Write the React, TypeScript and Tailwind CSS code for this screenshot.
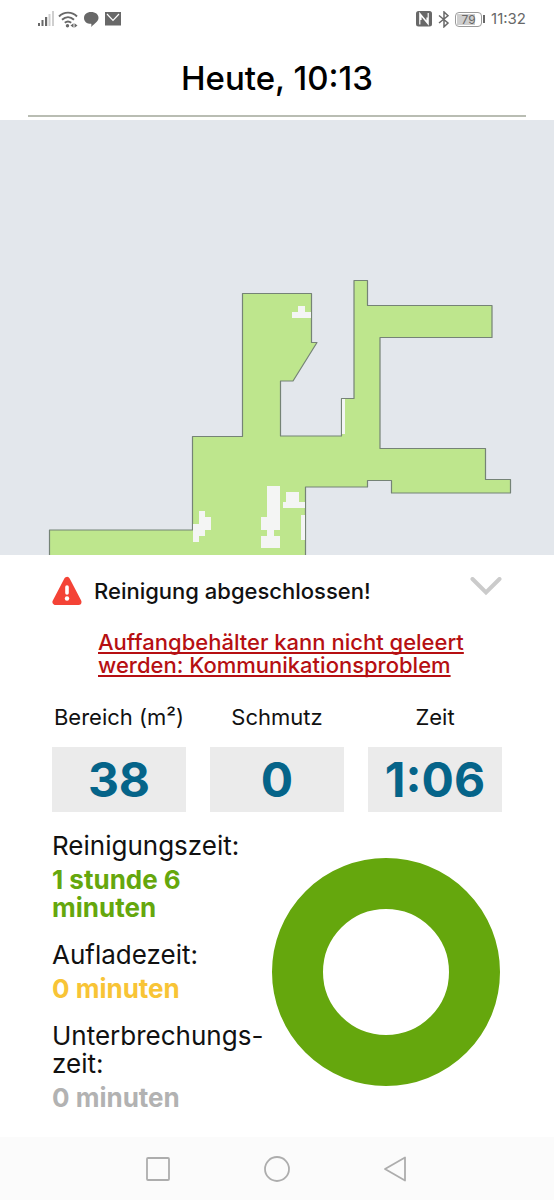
import type { ReactNode } from "react"

interface Stat {
  label: ReactNode
  value: string
}

interface Duration {
  label: ReactNode
  value: string
  color: string
}

const stats: Stat[] = [
  { label: "Bereich (m²)", value: "38" },
  { label: "Schmutz", value: "0" },
  { label: "Zeit", value: "1:06" },
]

const durations: Duration[] = [
  { label: "Reinigungszeit:", value: "1 stunde 6 minuten", color: "text-[#65a70d]" },
  { label: "Aufladezeit:", value: "0 minuten", color: "text-[#f8c436]" },
  {
    label: (
      <>
        Unterbrechungs-
        <br />
        zeit:
      </>
    ),
    value: "0 minuten",
    color: "text-[#b2b2b2]",
  },
]

function StatusBar() {
  return (
    <div className="flex h-[38px] items-center justify-between pr-7 pl-9 text-[#686868]">
      <div className="flex items-center gap-1">
        <svg width="18" height="16" viewBox="0 0 18 16" fill="currentColor">
          <rect x="2" y="12" width="2" height="3" />
          <rect x="5.5" y="9" width="2" height="6" />
          <rect x="9" y="6" width="2.2" height="9" />
          <g fill="#cfcfcf">
            <rect x="12.5" y="3" width="2" height="12" />
            <rect x="16" y="0" width="2" height="15" />
          </g>
        </svg>
        <svg width="20" height="17" viewBox="0 0 20 17" fill="none" stroke="currentColor" strokeWidth="1.9">
          <path d="M1 5.5C6 .3 14 .3 19 5.5" />
          <path d="M4 8.8c3.6-3.4 8.4-3.4 12 0" />
          <path d="M6.8 11.8c2-1.7 4.3-1.7 6.4 0" />
          <circle cx="9.5" cy="14.8" r="1.7" fill="currentColor" stroke="none" />
          <path d="M15.5 12.2 12.5 14.5l3 2.3zM16.5 12.2l3 2.3-3 2.3z" fill="currentColor" stroke="none" />
        </svg>
        <svg width="18" height="17" viewBox="0 0 18 17" fill="currentColor">
          <path d="M9 1c4.5 0 7.5 2.4 7.5 5.8 0 3.4-2.7 5-7.5 9.2.5-1.5.5-2.2.2-3.2C4.5 12.8 2 10.3 2 6.9 2 3.4 4.8 1 9 1z" />
        </svg>
        <svg width="18" height="16" viewBox="0 0 18 16">
          <rect x="1" y="1" width="16" height="13.5" fill="currentColor" />
          <path d="M3 3 9 9.3 15 3" fill="none" stroke="white" strokeWidth="1.2" />
        </svg>
      </div>
      <div className="flex items-center gap-1">
        <svg width="18" height="16" viewBox="0 0 18 16">
          <rect x="1" y="0" width="16" height="15.5" rx="2.5" fill="currentColor" />
          <path
            d="M4.8 13.5V2.5L12 11.2V6.5M13.2 2V13L6 4.3V9"
            fill="none"
            stroke="white"
            strokeWidth="1.2"
          />
        </svg>
        <svg width="14" height="17" viewBox="2 0 14 17" fill="none" stroke="currentColor" strokeWidth="1.5">
          <path d="M4 4.5 13 12l-4 3.8V1l4 3.8L4 12" />
        </svg>
        <div className="flex items-center gap-px">
          <div className="relative h-[15px] w-[27px] rounded-sm border border-[#9a9a9a] p-px">
            <div className="h-full w-4/5 bg-[#cecece]" />
            <span className="absolute inset-0 text-center text-xs leading-[13px]">79</span>
          </div>
          <div className="h-2 w-0.5 bg-[#686868]" />
        </div>
        <span className="ml-0.5 text-[15px] leading-5">11:32</span>
      </div>
    </div>
  )
}

function CleaningMap() {
  return (
    <svg viewBox="0 0 554 435" className="block w-full bg-[#e3e7ec]" role="img">
      <path
        d="M49.5 436V410H192.5V316.5H242.5V173.5H311.5V222.5H317L293 261H280.5V316H341.5V278.5H354V160.5H367.5V185.5H492V217.5H380V328.5H485.5V359.5H510.5V373H391.5V360.5H367.5V367H305.5V436"
        fill="#bee68d"
        stroke="#758376"
        strokeWidth="1.2"
        strokeLinejoin="round"
      />
      <g fill="#f4f5f4">
        <path d="M292 192h6v-6h7v6h6v6h-19z" />
        <path d="M342 279h3v35h-3z" />
        <path d="M193 404h6v-13h6v6h6v13h-6v6h-6v6h-6z" />
        <path d="M267 366h13v44h-6v6h6v12h-19v-12h6v-6h-6v-13h6z" />
        <path d="M286 372h13v10h6v6h-22v-6h3z" />
        <path d="M301 395h4v25h-4z" />
      </g>
    </svg>
  )
}

function WarningIcon() {
  return (
    <svg width="30" height="30" viewBox="0 0 30 30" className="shrink-0">
      <path
        d="M15 4 3.5 26h23z"
        fill="#f44336"
        stroke="#f44336"
        strokeWidth="6"
        strokeLinejoin="round"
      />
      <path d="M15 11v6" stroke="white" strokeWidth="3.6" strokeLinecap="round" />
      <circle cx="15" cy="22.5" r="2.2" fill="white" />
    </svg>
  )
}

export default function App() {
  return (
    <div className="flex min-h-screen flex-col bg-white font-['Inter',sans-serif] text-[#111]">
      <StatusBar />

      {/* Title */}
      <header className="mx-7 mb-[3px] border-b-2 border-[#b9bdb3] pt-5 pb-[17px]">
        <h1 className="text-center text-[33px] leading-10 font-medium text-black">Heute, 10:13</h1>
      </header>

      <CleaningMap />

      <main className="flex-1 px-[52px] pt-5">
        {/* Result */}
        <div className="flex items-center gap-3">
          <WarningIcon />
          <h2 className="flex-1 text-[22px] leading-8 font-medium">Reinigung abgeschlossen!</h2>
          <button type="button" aria-label="Details" className="-mt-2">
            <svg width="32" height="20" viewBox="0 0 32 20" fill="none">
              <path d="m2.5 2 13.5 13.5 13.5-13.5" stroke="#cbcbcb" strokeWidth="4" strokeLinecap="round" />
            </svg>
          </button>
        </div>

        <a
          href="#"
          className="mt-6 ml-[46px] block text-[22px] leading-[23px] font-medium text-[#b60f12] underline decoration-2 underline-offset-2 [text-decoration-skip-ink:none]"
        >
          Auffangbehälter kann nicht geleert werden: Kommunikationsproblem
        </a>

        {/* Totals */}
        <dl className="mt-[26px] grid grid-cols-3 gap-6">
          {stats.map((stat) => (
            <div key={stat.value} className="text-center">
              <dt className="text-[22px] leading-7 whitespace-nowrap">{stat.label}</dt>
              <dd className="mt-4 bg-[#ebebeb] text-[48px] leading-[65px] font-bold text-[#056489]">
                {stat.value}
              </dd>
            </div>
          ))}
        </dl>

        {/* Time breakdown */}
        <div className="mt-5 flex items-center justify-between pr-0.5">
          <dl className="flex w-[220px] flex-col gap-[19px] text-[26px] leading-7">
            {durations.map((duration, i) => (
              <div key={i}>
                <dt className="whitespace-nowrap">{duration.label}</dt>
                <dd className={`mt-[6px] w-40 font-bold ${duration.color}`}>{duration.value}</dd>
              </div>
            ))}
          </dl>
          <svg viewBox="0 0 228 228" className="w-[228px] shrink-0">
            <circle cx="114" cy="114" r="88.5" fill="none" stroke="#65a70d" strokeWidth="51" />
          </svg>
        </div>
      </main>

      {/* System navigation */}
      <nav className="flex h-[63px] items-center justify-center gap-[94px] bg-[#fbfbfb]">
        <button type="button" aria-label="Übersicht">
          <svg width="24" height="24" viewBox="0 0 24 24" fill="none" stroke="#adadad" strokeWidth="1.8">
            <rect x="1" y="1" width="22" height="22" rx="1" />
          </svg>
        </button>
        <button type="button" aria-label="Startseite">
          <svg width="26" height="26" viewBox="0 0 26 26" fill="none" stroke="#adadad" strokeWidth="1.8">
            <circle cx="13" cy="13" r="12" />
          </svg>
        </button>
        <button type="button" aria-label="Zurück">
          <svg
            width="24"
            height="26"
            viewBox="0 0 24 26"
            fill="none"
            stroke="#adadad"
            strokeWidth="1.8"
            strokeLinejoin="round"
          >
            <path d="M21 1.5v23L1 13z" />
          </svg>
        </button>
      </nav>
    </div>
  )
}
